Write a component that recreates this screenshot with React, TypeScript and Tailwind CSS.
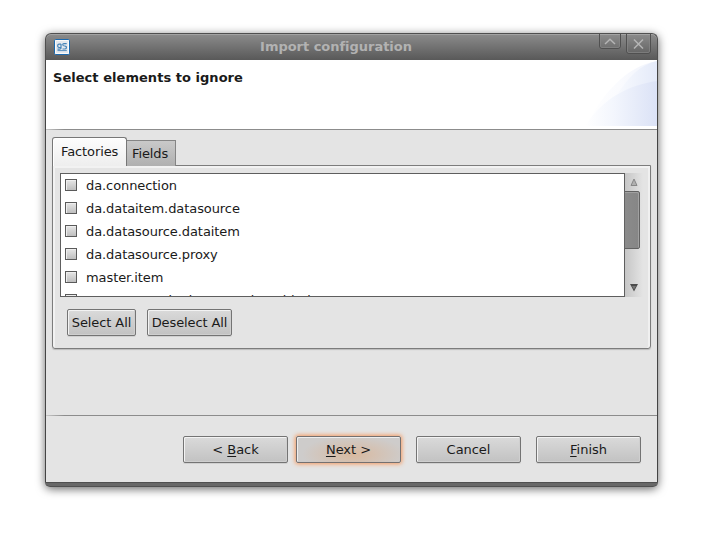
import React from "react";

const btn =
  "flex items-center justify-center rounded-[2px] border border-[#747474] bg-linear-to-b from-[#dadada] to-[#c2c2c2] shadow-[inset_1px_1px_0_#f3f3f3,inset_-1px_-1px_0_#cfcfcf,0_1px_0_#d0d0d0]";

const items = [
  "da.connection",
  "da.dataitem.datasource",
  "da.datasource.dataitem",
  "da.datasource.proxy",
  "master.item",
  "component.d.adapter.and.enabled",
];

function TitleBar() {
  return (
    <div className="flex h-[27px] shrink-0 rounded-t-[6px] border border-b-0 border-[#505050] bg-linear-to-b from-[#8c8c8c] to-[#595959] pl-[8px] shadow-[inset_0_1px_0_#a3a3a3]">
      <svg className="mt-[5px] h-[16px] w-[16px] shrink-0" viewBox="0 0 16 16">
        <rect x=".5" y=".5" width="15" height="15" rx="1.2" fill="#fafafa" stroke="#1c69ae" />
        <rect x="2" y="2" width="12" height="12" fill="#e4e8ee" />
        <g fill="none" stroke="#4684b8" strokeWidth="1.2">
          <path d="M7 5.100H5.100C3.200 5.100 3.200 8.500 5 8.500h2V4.900v4.200Q7 10.300 3.500 10.200" />
          <path d="M12.700 4.600H10Q8.600 4.600 8.800 6q.2 1 2 1 1.800.1 1.600 1.800-.2 1.200-1.600 1.200H8.500" />
          <path d="M3.500 11.600h9.300" strokeWidth=".9" />
        </g>
      </svg>
      <div className="mt-[4px] w-[527px] shrink-0 pl-[5px] text-center text-[13px] leading-[18px] font-bold tracking-[-0.03px] text-[#b2b2b2]">
        Import configuration
      </div>
      <svg className="h-[22px] w-[56px] shrink-0" viewBox="0 0 56 22" fill="none">
        <path d="M2.500 0V12q0 2.500 2.500 2.500h16q2.500 0 2.500-2.500V0" stroke="#505050" />
        <path d="M3.500 1V12q0 1.500 1.500 1.500h16q1.500 0 1.500-1.500V1" stroke="#8b8b8b" strokeOpacity=".6" />
        <path d="M8 10 13 5.300l5 4.700" stroke="#b5b5b5" strokeWidth="1.500" />
        <path d="M29.500 0V17q0 2.500 2.500 2.500h19q2.500 0 2.500-2.500V0" stroke="#505050" />
        <path d="M30.500 1V17q0 1.500 1.500 1.500h19q1.500 0 1.500-1.500V1" stroke="#8b8b8b" strokeOpacity=".6" />
        <path d="M37 5.500l9 9m0-9l-9 9" stroke="#b5b5b5" strokeWidth="1.500" />
      </svg>
    </div>
  );
}

function Banner() {
  return (
    <div className="flex h-[69px] shrink-0 justify-between bg-white pl-[7px]">
      <div className="pt-[9px] text-[13px] leading-[18px] font-bold tracking-[0.04px] text-[#1a1a1a]">
        Select elements to ignore
      </div>
      <svg className="h-[66px] w-[76px]" viewBox="0 0 76 66">
        <defs>
          <linearGradient id="sweepTop" x1="0" x2="1">
            <stop offset="0" stopColor="#fff" />
            <stop offset=".45" stopColor="#fafbfe" />
            <stop offset="1" stopColor="#f0f3fc" />
          </linearGradient>
          <linearGradient id="sweepMid" x1="0" x2="1">
            <stop offset="0" stopColor="#f8fafe" />
            <stop offset="1" stopColor="#e4eaf9" />
          </linearGradient>
          <linearGradient id="sweepLow" x1="0" x2="1">
            <stop offset="0" stopColor="#fff" />
            <stop offset=".4" stopColor="#f3f6fd" />
            <stop offset="1" stopColor="#dbe2f6" />
          </linearGradient>
        </defs>
        <path d="M6 66C20 34 46 6 76 1V66Z" fill="url(#sweepTop)" />
        <path d="M36 35C47 17 59 5 76 1V66H36Z" fill="url(#sweepMid)" />
        <path d="M4 66C22 38 48 25 76 21V66Z" fill="url(#sweepLow)" />
      </svg>
    </div>
  );
}

function ScrollBar() {
  return (
    <div className="flex h-[124px] w-[18px] flex-col bg-linear-to-r from-[#c6c6c6] to-[#e4e4e4]">
      <svg className="h-[18px] w-[18px] shrink-0" viewBox="0 0 18 18">
        <path d="M9 6 12 12.500h-6Z" fill="#b0b0b0" stroke="#888" />
      </svg>
      <div className="-ml-px h-[58px] w-[16px] shrink-0 rounded-r-[2px] border border-[#626262] bg-linear-to-r from-[#8b8b8b] to-[#868686] shadow-[inset_-1px_1px_0_#a0a0a0]" />
      <svg className="mt-[30px] h-[18px] w-[18px] shrink-0" viewBox="0 0 18 18">
        <path d="M5 5h8L9 12.500Z" fill="#4c4c4c" />
        <path d="M7 7h4L9 10.500Z" fill="#777" />
      </svg>
    </div>
  );
}

function Tabs() {
  return (
    <div className="flex h-[29px] items-end pl-[6px] tracking-[-0.1px]">
      <div className="relative z-10 h-[29px] w-[75px] rounded-t-[3px] border border-b-0 border-[#777] bg-linear-to-b from-[#fdfdfd] to-[#eeeeee] pl-[8px] pt-[5px] leading-[18px] shadow-[inset_1px_1px_0_#fff]">
        Factories
      </div>
      <div className="h-[26px] w-[49px] border border-l-0 border-b-0 border-[#858585] bg-linear-to-b from-[#c9c9c9] to-[#b0b0b0] pl-[5px] pt-[4px] leading-[18px]">
        Fields
      </div>
    </div>
  );
}

function Rule() {
  return <div className="h-px shrink-0 bg-linear-to-r from-[#c8c8c8] via-[#8c8c8c] via-3% to-[#8c8c8c]" />;
}

export default function App() {
  return (
    <div className="h-[534px] w-[708px] overflow-hidden bg-white pl-[45px] pt-[33px] font-['DejaVu_Sans',sans-serif] text-[13px] text-[#1a1a1a]">
      <div className="flex h-[454px] w-[613px] flex-col rounded-[6px] shadow-[0_2px_10px_rgba(0,0,0,.6)]">
        <TitleBar />
        <div className="flex h-[422px] flex-col border-x border-[#444] bg-[#e4e4e4]">
          <Banner />
          <Rule />
          <div className="h-[285px] pt-[7px]">
            <Tabs />
            <div className="-mt-px ml-[6px] h-[184px] w-[599px] rounded-b-[3px] border border-[#7c7c7c] pl-[7px] pt-[7px] shadow-[inset_2px_2px_0_#f2f2f2,inset_-2px_0_0_#f0f0f0,0_1px_1px_#bbb]">
              <div className="flex">
                <div className="h-[124px] w-[565px] overflow-hidden border border-[#5e5e5e] bg-white pl-[4px]">
                  {items.map((t) => (
                    <div key={t} className="flex h-[23px] items-start gap-[9px] tracking-[-0.08px] last:tracking-normal">
                      <div className="mt-[5px] h-[12px] w-[12px] border border-[#5a5a5a] bg-linear-to-b from-[#e6e6e6] to-[#bebebe] shadow-[inset_1px_1px_0_#eee]" />
                      <span className="mt-[3px] leading-[18px]">{t}</span>
                    </div>
                  ))}
                </div>
                <ScrollBar />
              </div>
              <div className="flex gap-[11px] pl-[7px] pt-[12px] tracking-[-0.1px]">
                <div className={`${btn} h-[27px] w-[69px]`}>Select All</div>
                <div className={`${btn} h-[27px] w-[85px]`}>Deselect All</div>
              </div>
            </div>
          </div>
          <Rule />
          <div className="flex pl-[137px] pt-[20px] tracking-[-0.04px]">
            <div className={`${btn} h-[27px] w-[105px]`}>
              <span>&lt; <u className="underline-offset-2">B</u>ack</span>
            </div>
            <div className="ml-[8px] flex h-[27px] w-[105px] items-center justify-center rounded-[2px] border border-[#747070] bg-radial-[ellipse_50%_75%_at_55%_70%] from-[#d9b99f] to-[#cecccb] shadow-[inset_1px_1px_0_#eee,0_0_4px_1px_#f59a60]">
              <span><u className="underline-offset-2">N</u>ext &gt;</span>
            </div>
            <div className={`${btn} ml-[15px] h-[27px] w-[105px]`}>Cancel</div>
            <div className={`${btn} ml-[15px] h-[27px] w-[105px]`}>
              <span><u className="underline-offset-2">F</u>inish</span>
            </div>
          </div>
        </div>
        <div className="h-[5px] rounded-b-[5px] border-y border-[#505050] bg-[#686868]" />
      </div>
    </div>
  );
}
